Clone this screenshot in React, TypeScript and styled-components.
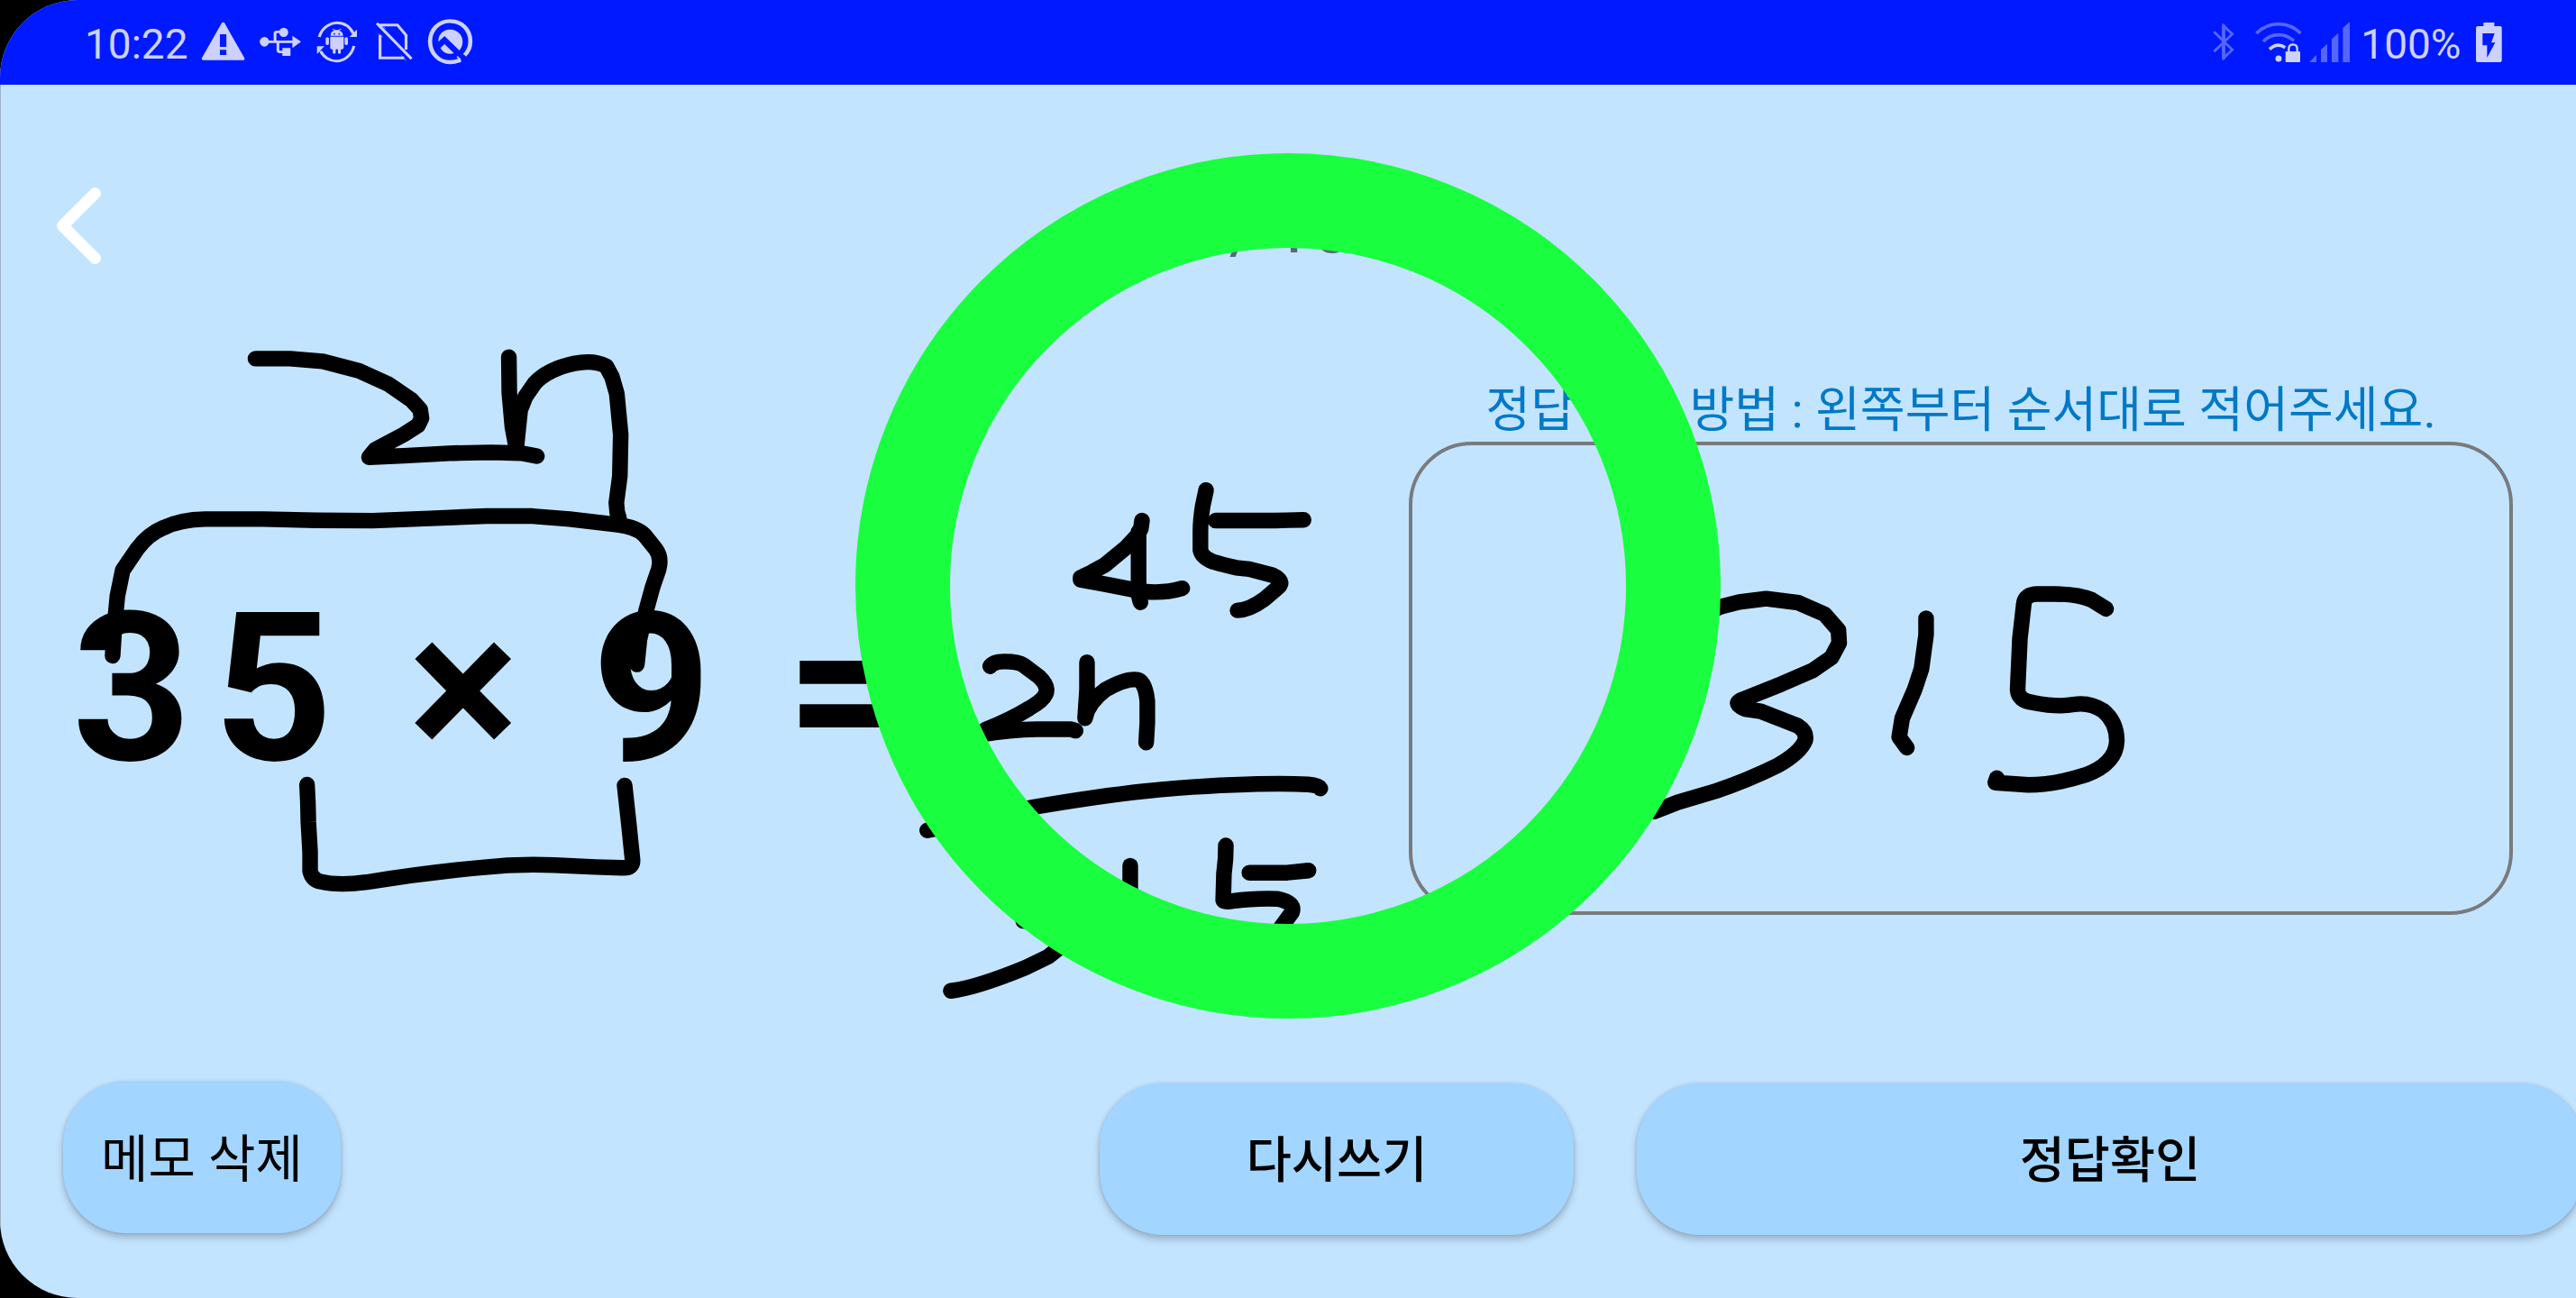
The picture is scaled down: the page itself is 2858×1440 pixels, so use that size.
import React from "react";
import styled, { createGlobalStyle } from "styled-components";

const GlobalStyle = createGlobalStyle`
  html, body { margin: 0; padding: 0; background: #000; }
  *, *::before, *::after { box-sizing: border-box; }
`;

const LIGHT = "#ccd1ff";
const DIM = "#5566ff";
const KOREAN = `Roboto, "Noto Sans CJK KR", sans-serif`;

const Screen = styled.div`
  position: relative;
  display: flex;
  flex-direction: column;
  width: 2858px;
  height: 1440px;
  overflow: hidden;
  background: #c3e4ff;
  border-radius: 86px 0 0 86px;
  font-family: ${KOREAN};
  color: #000;
  &::before {
    content: "";
    position: absolute;
    inset: 94px auto 80px 0;
    width: 1px;
    background: #9cb4c8;
  }
`;

const StatusBar = styled.header`
  display: flex;
  justify-content: space-between;
  flex: none;
  height: 94px;
  padding: 0 82px 2px 94px;
  background: #0019ff;
`;

const StatusGroup = styled.div`
  display: flex;
  align-items: center;
`;

const StatusText = styled.span<{ $width: number; $gap?: number }>`
  width: ${(p) => p.$width}px;
  margin-left: ${(p) => p.$gap ?? 0}px;
  font: 400 46px/54px Roboto, sans-serif;
  color: ${LIGHT};
  white-space: nowrap;
  padding-top: 5px;
`;

const Glyph = styled.svg<{ $w: number; $gap?: number }>`
  flex: none;
  width: ${(p) => p.$w}px;
  height: 54px;
  margin-left: ${(p) => p.$gap ?? 0}px;
  overflow: visible;
`;

const Board = styled.main`
  display: grid;
  grid-template-columns: 1563px 1225px;
  grid-template-rows: 312px 649px;
  flex: none;
  height: 1106px;
`;

const TopRow = styled.div`
  grid-column: 1 / -1;
  display: flex;
  align-items: flex-start;
`;

const BackButton = styled.button`
  display: flex;
  width: 76px;
  height: 100px;
  margin: 106px 0 0 50px;
  padding: 0;
  border: 0;
  background: none;
`;

const Counter = styled.span`
  margin: 112px 0 0 1179px;
  font: 400 80px/94px Roboto, sans-serif;
  word-spacing: -6px;
  color: rgba(0, 0, 0, 0.54);
  white-space: nowrap;
`;

const Expression = styled.div`
  display: flex;
  padding: 223px 0 0 80px;
  font: 700 230.5px/270px Roboto, sans-serif;
`;

const Term = styled.span<{ $w: number }>`
  flex: none;
  width: ${(p) => p.$w}px;
`;

const AnswerColumn = styled.section`
  display: flex;
  flex-direction: column;
  align-items: stretch;
`;

const Hint = styled.p`
  height: 84px;
  margin: 0;
  padding-top: 8px;
  font-size: 54.15px;
  line-height: 84px;
  text-align: center;
  color: #0079c6;
  white-space: nowrap;
`;

const AnswerBox = styled.div`
  height: 525px;
  border: 4px solid #787b7e;
  border-radius: 70px;
`;

const Actions = styled.footer`
  display: flex;
  align-items: flex-start;
  padding-left: 70px;
`;

const ActionButton = styled.button<{ $w: number; $gap?: number; $top?: number; $weight?: number; $size?: number }>`
  flex: none;
  width: ${(p) => p.$w}px;
  height: 168px;
  margin: ${(p) => p.$top ?? 0}px 0 0 ${(p) => p.$gap ?? 0}px;
  padding: 0 0 7px;
  border: 0;
  border-radius: 70px;
  background: #a2d5ff;
  box-shadow: 0 5px 8px rgba(0, 0, 0, 0.22), 0 0 4px rgba(0, 0, 0, 0.12);
  font-family: ${KOREAN};
  font-size: ${(p) => p.$size ?? 54.5}px;
  font-weight: ${(p) => p.$weight ?? 500};
  color: #000;
`;

const Ink = styled.svg`
  position: absolute;
  left: 0;
  top: 0;
  pointer-events: none;
  path {
    fill: none;
    stroke: #000;
    stroke-width: 17.4px;
    stroke-linecap: round;
    stroke-linejoin: round;
    vector-effect: non-scaling-stroke;
  }
`;

const CorrectMark = styled.div`
  position: absolute;
  left: 949px;
  top: 170px;
  width: 960px;
  height: 960px;
  border: 105px solid #19ff40;
  border-radius: 50%;
  pointer-events: none;
`;

const memoTop = [
  "M461 90H540L615 97L698 122L765 157L818 199L838 224L841 247L833 266L800 290L735 330L721 350L800 346L915 339L1000 337L1070 339L1105 347",
  "M1041 86L1042 180L1049 270L1058 325L1067 225L1079 190L1100 155Q1130 118 1190 103Q1235 92 1264 110L1277 138L1288 182L1297 290L1295 400L1287 470L1289 495L1293 510",
  "M134 873L138 800L145 715L157 648L190 592Q215 553 250 536Q290 514 345 513L480 513L600 516L730 517L860 511L990 505L1095 505L1180 513L1290 528Q1335 535 1352 556L1377 592Q1391 613 1384 645L1370 692L1355 755L1340 830L1334 896",
  "M579 1213L581 1260L582 1310L586 1390V1440Q590 1462 608 1468Q650 1480 715 1470Q850 1445 980 1431Q1060 1421 1145 1425L1240 1430L1300 1432Q1326 1434 1324 1410L1315 1310L1306 1215",
];

const memoSum = [
  "M967 190L964 212L955 230L925 263L870 310L835 330L805 345V351L870 363L940 377Q1010 393 1073 374",
  "M958 220V392L963 412",
  "M1136 107L1127 150Q1121 190 1121 220V270Q1125 290 1155 302Q1180 310 1215 318L1250 322L1310 338Q1345 355 1325 372L1290 403Q1250 433 1219 434",
  "M1161 190H1320L1350 189L1393 188",
  "M567 586Q575 573 605 573Q640 573 655 583L695 614Q722 640 713 662Q705 680 670 700Q620 732 555 758L540 772Q620 758 690 757H780L792 761",
  "M822 575V650L817 727Q825 685 870 650Q920 620 950 622Q975 622 981 680V740L978 793",
  "M401 1032Q600 990 680 969Q900 930 1060 917Q1280 901 1405 907Q1432 909 1437 918",
  "M510 1120Q620 1060 680 1110Q720 1160 654 1278Q800 1290 748 1352L720 1375L660 1405Q530 1460 463 1468",
  "M936 1128V1300",
  "M1188 1073L1187 1110L1183 1150L1181 1222Q1185 1228 1205 1224Q1260 1216 1325 1218Q1372 1228 1362 1255L1330 1300",
  "M1250 1147H1350L1406 1141",
];

const answer = [
  "M400 740L457 696L480 684L515 675L557 686L591 716L609 758L610 792L600 830L575 865L535 900L488 938Q468 950 488 966L508 972L556 1010Q568 1025 566 1048Q560 1080 530 1115Q490 1155 450 1182L400 1212L370 1236",
  "M723 727L723 770L717 860L708 915L692 990L688 1040L698 1068",
  "M957 702L938 678Q920 663 890 663H868Q851 663 850 690L845 780L842 915Q843 945 862 949Q895 962 915 954Q935 947 953 970Q971 1000 971 1050Q970 1110 930 1140Q890 1166 856 1166L813 1160L815 1148",
];

const strokes = (list: string[]) => list.map((d) => <path key={d} d={d} />);

function LeftStatus() {
  return (
    <StatusGroup>
      <StatusText $width={130}>10:22</StatusText>
      <Glyph $w={47.5} viewBox="627 57 133 162" preserveAspectRatio="none" fill={LIGHT}>
        <path fillRule="evenodd" d="M689 76Q693 73 697 76L759 193Q761 200 756 200H631Q625 200 627 193ZM683 114V156H703V114ZM683 166V183H703V166Z" />
      </Glyph>
      <Glyph $w={45.7} $gap={16.1} viewBox="805 57 128 162" preserveAspectRatio="none" fill={LIGHT}>
        <ellipse cx="820" cy="139" rx="14.5" ry="16" />
        <ellipse cx="880" cy="107.500" rx="14" ry="15.500" />
        <path d="M907 119L934 139L907 160ZM876 160H901V186H876Z" />
        <path d="M820 139H910M853 139V112Q853 106 859 106H876M862 139V166Q862 173 868 173H880" fill="none" stroke={LIGHT} strokeWidth="8.500" />
      </Glyph>
      <Glyph $w={45.7} $gap={17.500} viewBox="982 57 128 162" preserveAspectRatio="none" fill={LIGHT}>
        <path d="M991 123C1000 87 1030 76 1045 76C1068 76 1087 90 1097 112M1099 153C1091 187 1066 203 1045 203C1024 203 1004 190 995 170" fill="none" stroke={LIGHT} strokeWidth="9" />
        <path d="M1108 98V123H1085ZM984 180V154H1007Z" />
        <path d="M1026 119Q1026 103 1038 101L1031 97L1033 95L1041 100H1050L1058 95L1060 97L1053 102Q1065 106 1065 119Z" />
        <path d="M1025 122H1067V158Q1067 164 1061 164H1058V176Q1054 182 1049 176V164H1042V176Q1038 182 1033 176V164H1030Q1025 164 1025 158ZM1011 127Q1016 121 1021 127V147Q1016 153 1011 147ZM1070 127Q1075 121 1080 127V147Q1075 153 1070 147Z" />
        <circle cx="1038" cy="113" r="2.500" fill="#0019ff" />
        <circle cx="1053" cy="113" r="2.500" fill="#0019ff" />
      </Glyph>
      <Glyph $w={41} $gap={20.7} viewBox="1168 57 115 162" preserveAspectRatio="none" fill="none" stroke={LIGHT} strokeWidth="9">
        <path d="M1171 77L1279 196" />
        <path d="M1181 83H1235L1262 117V165M1181 116V193H1256" />
        <path d="M1180 79L1198 95M1175 110L1188 124M1246 184L1262 201" strokeWidth="2" />
      </Glyph>
      <Glyph $w={49} $gap={16.8} viewBox="1330 57 137 162" preserveAspectRatio="none">
        <path d="M1443 184C1456 170 1461 155 1461 138C1461 99 1434 70 1398 70C1363 70 1336 99 1336 138C1336 177 1363 207 1398 207C1410 207 1421 204 1431 199" fill="none" stroke={LIGHT} strokeWidth="13" />
        <path d="M1362 139C1360 114 1378 98 1398 98C1420 98 1437 116 1437 139C1437 151 1433 160 1427 168L1381 120ZM1368 160L1381 147L1410 177C1392 184 1376 175 1368 160Z" fill={LIGHT} />
        <path d="M1420 188L1430 199" stroke={LIGHT} strokeWidth="5" />
      </Glyph>
    </StatusGroup>
  );
}

function RightStatus() {
  return (
    <StatusGroup>
      <Glyph $w={23.7} viewBox="165 57 71 162" fill="none" stroke={DIM} strokeWidth="8.500">
        <path d="M169 106L230 166L201 193V86L230 113L169 172" />
        <path d="M201 82V197" strokeWidth="11" />
      </Glyph>
      <Glyph $w={51.7} $gap={23} viewBox="305 57 155 162" fill="none" stroke={DIM} strokeWidth="11">
        <path d="M309 111Q341 80 383 80Q425 80 456 111M332 138Q353 116 383 116Q412 116 434 136" />
        <path d="M353 164Q378 140 405 158" stroke={LIGHT} />
        <circle cx="383" cy="195" r="10.500" fill={LIGHT} stroke="none" />
        <path d="M417 174V163Q417 148 431 148Q445 148 445 163V174" stroke={LIGHT} strokeWidth="7" />
        <rect x="406" y="171" width="49" height="36" rx="2" fill={LIGHT} stroke="none" />
      </Glyph>
      <Glyph $w={45} $gap={8.700} viewBox="486 57 135 162" fill={DIM}>
        <path d="M486 207L510 183V207ZM525 165L546 146V207H525ZM561 130L583 110V207H561ZM598 93L621 73V207H598Z" />
      </Glyph>
      <StatusText $width={128} $gap={12}>100%</StatusText>
      <Glyph $w={28.700} viewBox="1040 57 86 162">
        <path fill={LIGHT} fillRule="evenodd" d="M1065 75H1101V87H1120Q1126 87 1126 93V201Q1126 207 1120 207H1046Q1040 207 1040 201V93Q1040 87 1046 87H1065ZM1062 111V151H1077V192L1104 142H1091L1102 111Z" />
      </Glyph>
    </StatusGroup>
  );
}

export default function App() {
  return (
    <>
      <GlobalStyle />
      <Screen>
        <StatusBar>
          <LeftStatus />
          <RightStatus />
        </StatusBar>
        <Board>
          <TopRow>
            <BackButton aria-label="back">
              <svg width="76" height="100" viewBox="50 200 76 100">
                <path d="M105.5 214.500L69.500 250.500L105.500 286.500" fill="none" stroke="#fff" strokeWidth="13" strokeLinecap="round" strokeLinejoin="round" />
              </svg>
            </BackButton>
            <Counter>1 / 10</Counter>
          </TopRow>
          <Expression>
            <Term $w={157}>3</Term>
            <Term $w={216}>5</Term>
            <Term $w={204}>×</Term>
            <Term $w={215}>9</Term>
            <Term $w={130}>=</Term>
          </Expression>
          <AnswerColumn>
            <Hint>정답 작성 방법 : 왼쪽부터 순서대로 적어주세요.</Hint>
            <AnswerBox />
          </AnswerColumn>
        </Board>
        <Actions>
          <ActionButton $w={308} $weight={400} $size={57}>메모 삭제</ActionButton>
          <ActionButton $w={526} $gap={842} $top={2}>다시쓰기</ActionButton>
          <ActionButton $w={1050} $gap={70} $top={2}>정답확인</ActionButton>
        </Actions>
        <Ink width="2858" height="1440" viewBox="0 0 2858 1440">
          <g transform="translate(60 360) scale(0.4847 0.4209)">{strokes(memoTop)}</g>
          <g transform="translate(860 500) scale(0.4209 0.4082)">{strokes(memoSum)}</g>
          <g transform="translate(1520 380) scale(0.8533 0.4209)">{strokes(answer)}</g>
        </Ink>
        <CorrectMark />
      </Screen>
    </>
  );
}
